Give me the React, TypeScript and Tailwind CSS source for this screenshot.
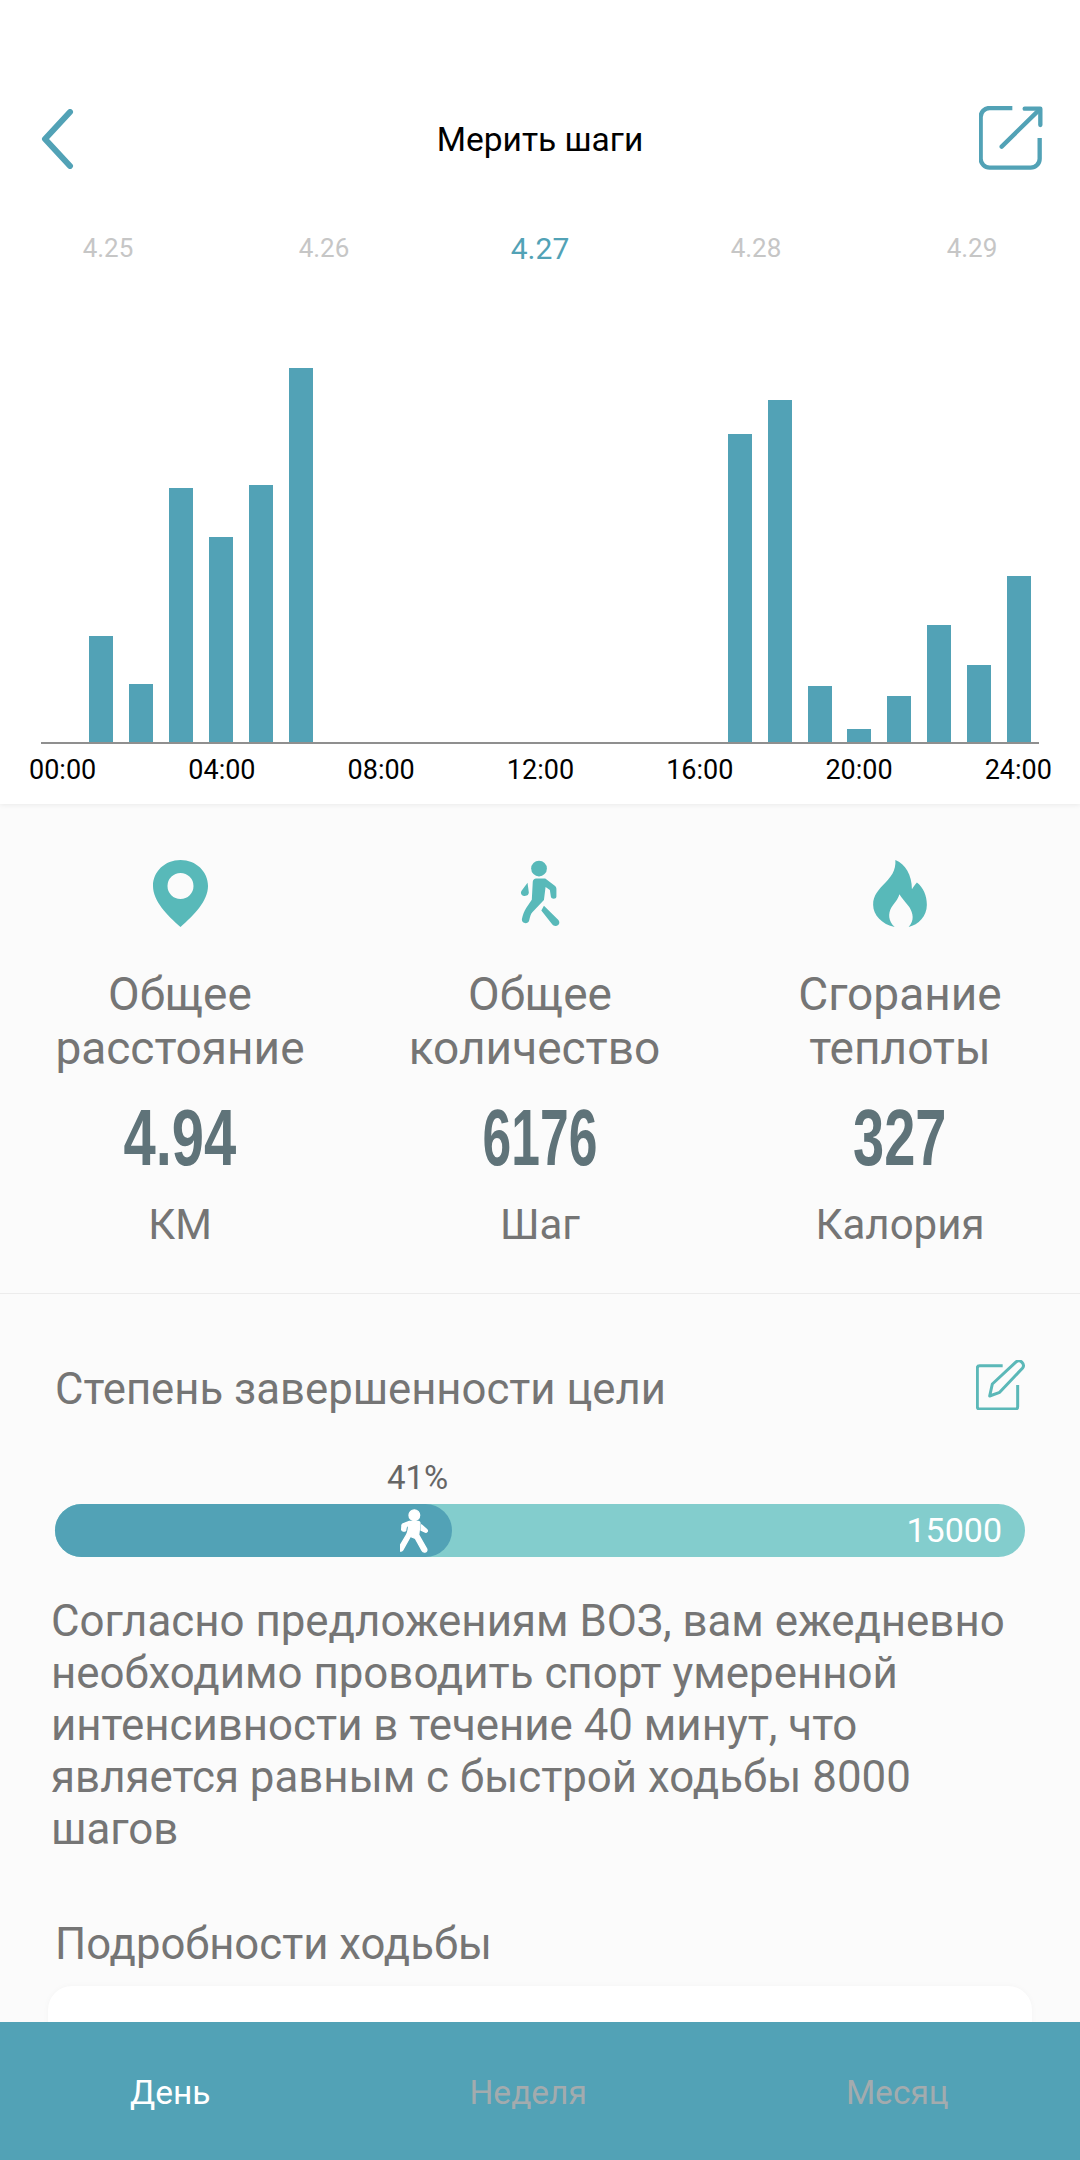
import * as React from "react";

const hours = [106, 58, 254, 205, 257, 374, 0, 0, 0, 0, 0, 0, 0, 0, 0, 0, 308, 342, 56, 13, 46, 117, 77, 166];
const dates = ["4.25", "4.26", "4.27", "4.28", "4.29"];
const axis = ["00:00", "04:00", "08:00", "12:00", "16:00", "20:00", "24:00"];

const Back = () => (
  <svg className="ml-[4px] w-[33px] h-[60px]" viewBox="0 0 33 60" fill="none" stroke="#52a2b6" strokeWidth={6} strokeLinecap="round" strokeLinejoin="round">
    <path d="M29 3L4 30l25 27" />
  </svg>
);

const Share = () => (
  <svg className="w-[64px] h-[66px]" viewBox="58 46 192 198" fill="none" stroke="#52a2b6" strokeWidth={13} strokeLinecap="round" strokeLinejoin="round">
    <path d="M158 52H90a27 27 0 0 0-27 27v125a27 27 0 0 0 27 27h123a27 27 0 0 0 27-27v-62" strokeLinecap="butt" />
    <path d="M126 168L240 56" />
    <path d="M195 54h47v49" />
  </svg>
);

const Pin = () => (
  <svg className="w-[55px] h-[67px]" viewBox="0 0 55 67" fill="#58b9b9">
    <path fillRule="evenodd" d="M27.5 0C12 0 0 11.5 0 26c0 15 14 29 27.5 41C41 55 55 41 55 26 55 11.5 43 0 27.5 0zm0 13a13 13 0 1 1 0 26 13 13 0 0 1 0-26z" />
  </svg>
);

const Walker = () => (
  <svg className="w-[40px] h-[67px]" viewBox="88 28 120 204" fill="#58b9b9">
    <circle cx="145" cy="54" r="24" />
    <path d="M136 84h28l28 22c4 3 6 6 6 11v22c0 9-16 9-17 0l-3-20-13-9-5 40-36 38c-4 5-6 12-9 24-3 13-24 10-22-4 2-12 7-24 13-34l17-25 3-55c0-5 5-10 10-10z" />
    <path d="M110 97l4 30c0 6-5 10-10 10-10 3-18-7-12-15z" />
    <path d="M160 167l44 44c6 7 2 17-7 18-5 1-9-2-12-5l-33-42z" />
  </svg>
);

const Flame = () => (
  <svg className="w-[56px] h-[67px]" viewBox="68 30 162 202" fill="#58b9b9">
    <path d="M135 30c30 12 50 45 50 88 4-6 10-14 15-20 20 16 30 40 30 67 0 35-25 60-55 67 18-20 14-40 2-60-12-16-22-26-30-39-4 16-14 24-24 40-10 18-10 40 10 59-38-8-65-35-65-67 0-58 72-70 67-135z" />
  </svg>
);

const Edit = () => (
  <svg className="w-[50px] h-[50px]" viewBox="45 33 150 150" fill="none" stroke="#5bb8b8" strokeWidth={9} strokeLinecap="round" strokeLinejoin="round">
    <path d="M125 50H56a7 7 0 0 0-7 7v116a7 7 0 0 0 7 7h107a7 7 0 0 0 7-7v-65" strokeLinecap="butt" />
    <path d="M86 141l8-36 72-67c6-4 12-3 17 2s6 11 2 17l-69 73z" />
  </svg>
);

const WalkerWhite = () => (
  <svg className="w-[28px] h-[44px]" viewBox="88 146 84 131" fill="#ffffff" stroke="#ffffff" strokeWidth={4} strokeLinejoin="round">
    <circle cx="131" cy="164" r="16" />
    <path d="M116 183h26c4 0 6 3 6 7l-4 33 24 42c2 6-1 10-6 10-4 0-6-1-8-5l-20-36-15-6-23 41c-5 6-14 2-12-6l24-41c3-5 4-11 5-17l1-12-7 6c-1 4-2 8-2 11-3 3-10 3-12-2l1-14c0-2 1-3 3-4z" />
    <path d="M152 193l17 15c3 4-1 8-5 7l-13-6z" />
  </svg>
);

const Stat = ({
  icon,
  title,
  second,
  secondClass = "",
  value,
  valueClass,
  unit,
}: {
  icon: React.ReactNode;
  title: string;
  second: string;
  secondClass?: string;
  value: string;
  valueClass: string;
  unit: string;
}) => (
  <div className="flex flex-col items-center">
    <div className="h-[67px] flex items-center">{icon}</div>
    <div className="mt-[40px] text-[46px] leading-[54px] text-[#757575] text-center whitespace-nowrap">
      {title}
      <br />
      <span className={secondClass}>{second}</span>
    </div>
    <div className={`mt-[23px] h-[80px] leading-[80px] text-[80px] font-bold text-[#5f7379] font-['Liberation_Sans',sans-serif] ${valueClass}`}>{value}</div>
    <div className="mt-[20px] text-[42px] leading-[54px] text-[#757575]">{unit}</div>
  </div>
);

export default function App() {
  return (
    <div className="w-[1080px] h-[2160px] flex flex-col overflow-hidden bg-[#fbfbfb] font-['Roboto',sans-serif]">
      {/* top: header, dates and chart */}
      <div className="h-[804px] shrink-0 bg-white pt-[106px] shadow-[0_1px_5px_rgba(0,0,0,0.07)] relative">
        <div className="grid grid-cols-3 items-center h-[66px] pl-[37px] pr-[37px]">
          <Back />
          <span className="pt-[2px] text-center text-[33.5px] text-black whitespace-nowrap">Мерить шаги</span>
          <div className="flex justify-end">
            <Share />
          </div>
        </div>
        <div className="grid grid-cols-5 mt-[54px] h-[40px] items-center text-center text-[26px] text-[#c6c6c6]">
          {dates.map((d) => (
            <span key={d} className={d === "4.27" ? "text-[30px] text-[#52a2b6]" : ""}>
              {d}
            </span>
          ))}
        </div>
        <div className="ml-[41px] w-[998px] h-[377px] mt-[101px] flex items-end pl-[40px] border-b-2 border-[#8f8f8f]">
          {hours.map((h, i) => (
            <div key={i} className="flex-1 flex justify-center">
              <div className="w-[24px] bg-[#52a2b6]" style={{ height: h }} />
            </div>
          ))}
        </div>
        <div className="mt-[9px] pl-[29px] w-[1052px] flex justify-between text-[27px] leading-[34px] text-black">
          {axis.map((a) => (
            <span key={a}>{a}</span>
          ))}
        </div>
      </div>

      {/* totals */}
      <div className="h-[490px] shrink-0 pt-[56px] grid grid-cols-3 border-b border-[#ececec]">
        <Stat icon={<Pin />} title="Общее" second="расстояние" value="4.94" valueClass="scale-x-[0.725]" unit="КМ" />
        <Stat icon={<Walker />} title="Общее" second="количество" secondClass="pr-[11px]" value="6176" valueClass="scale-x-[0.645]" unit="Шаг" />
        <Stat icon={<Flame />} title="Сгорание" second="теплоты" value="327" valueClass="scale-x-[0.7]" unit="Калория" />
      </div>

      {/* goal */}
      <div className="flex-1 min-h-0 overflow-hidden">
        <div className="flex items-center justify-between pl-[55px] pr-[54px] mt-[66px] h-[50px]">
          <span className="pt-[10px] text-[43.7px] text-[#757575]">Степень завершенности цели</span>
          <Edit />
        </div>
        <div className="mt-[50px] pl-[387px] text-[33px] leading-[36px] text-[#666666]">41%</div>
        <div className="relative mt-[8px] mx-[55px] h-[53px] rounded-full bg-[#83cdcd] flex items-center justify-end pr-[23px] text-[34px] text-white">
          15000
          <div className="absolute left-0 top-0 w-[397px] h-[53px] rounded-full bg-[#52a2b6] flex items-center justify-end pr-[24px]">
            <WalkerWhite />
          </div>
        </div>
        <p className="mt-[38px] pl-[51px] pr-[60px] text-[43.85px] leading-[52px] text-[#757575]">
          Согласно предложениям ВОЗ, вам ежедневно необходимо проводить спорт умеренной интенсивности в течение 40 минут, что является равным с быстрой ходьбы 8000 шагов
        </p>
        <div className="mt-[63px] pl-[55px] text-[43.7px] leading-[52px] text-[#757575]">Подробности ходьбы</div>
        <div className="mt-[16px] mx-[48px] h-[200px] rounded-[24px] bg-white shadow-[0_0_6px_rgba(0,0,0,0.03)]" />
      </div>

      {/* tabs */}
      <div className="h-[138px] shrink-0 pt-[4px] bg-[#52a2b6] flex items-center pl-[130px] gap-[259px] text-[33.5px] text-[#a3abae]">
        <span className="text-white">День</span>
        <span>Неделя</span>
        <span>Месяц</span>
      </div>
    </div>
  );
}
